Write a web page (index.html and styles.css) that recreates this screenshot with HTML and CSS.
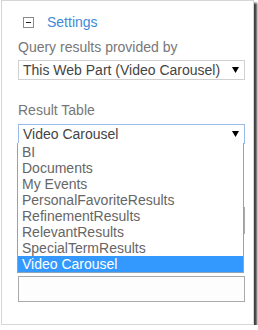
FILE: index.html
```html
<!DOCTYPE html>
<html lang="en">
<head>
  <meta charset="UTF-8">
  <title>Settings</title>
  <link rel="stylesheet" href="styles.css">
</head>
<body>
  <div class="panel">
    <div class="header">
      <span class="toggle"></span>
      <span class="header-title">Settings</span>
    </div>

    <div class="label label-first">Query results provided by</div>
    <div class="select">
      <span>This Web Part (Video Carousel)</span>
      <svg class="arrow" width="7" height="6" viewBox="0 0 7 6"><polygon points="0,0 7,0 3.5,6" fill="#000"/></svg>
    </div>

    <div class="label label-second">Result Table</div>
    <div class="select select-open">
      <span>Video Carousel</span>
      <svg class="arrow" width="7" height="6" viewBox="0 0 7 6"><polygon points="0,0 7,0 3.5,6" fill="#000"/></svg>
      <ul class="options">
        <li>BI</li>
        <li>Documents</li>
        <li>My Events</li>
        <li>PersonalFavoriteResults</li>
        <li>RefinementResults</li>
        <li>RelevantResults</li>
        <li>SpecialTermResults</li>
        <li class="selected">Video Carousel</li>
      </ul>
    </div>

    <div class="textbox textbox-hidden"></div>
    <div class="textbox textbox-last"></div>
  </div>
</body>
</html>
```

FILE: styles.css
```css
body {
  margin: 0;
  background: #fff;
  font-family: "Liberation Sans", Arial, sans-serif;
  font-size: 14px;
  line-height: 16px;
}
.panel {
  box-sizing: border-box;
  width: 253px;
  height: 325px;
  margin-left: 1px;
  padding: 13px 8px 0 16px;
  background: #fff;
  border: 1px solid #d6d6d6;
  box-shadow: 3px 3px 2px rgba(0, 0, 0, 0.75);
}
.header {
  display: flex;
  align-items: flex-start;
  height: 16px;
}
.toggle {
  position: relative;
  box-sizing: border-box;
  width: 11px;
  height: 11px;
  margin: 3px 0 0 5px;
  border: 1px solid #8a8a8a;
  background: #fff;
}
.toggle::after {
  content: "";
  position: absolute;
  left: 2px;
  top: 4px;
  width: 5px;
  height: 1px;
  background: #222;
}
.header-title {
  margin-left: 13px;
  color: #3d8bd6;
}
.label {
  color: #777;
}
.label-first {
  margin-top: 9px;
}
.label-second {
  margin-top: 22px;
}
.select {
  position: relative;
  box-sizing: border-box;
  display: flex;
  align-items: center;
  justify-content: space-between;
  height: 20px;
  margin-top: 5px;
  padding: 0 5px 0 4px;
  border: 1px solid #d0d0d0;
  background: #fff;
  color: #444;
}
.select-open {
  margin-top: 6px;
  border-color: #9cbbe8;
  z-index: 2;
}
.arrow {
  display: block;
}
.options {
  position: absolute;
  left: -2px;
  right: 0;
  top: 100%;
  margin: 0;
  padding: 0;
  list-style: none;
  background: #fff;
  border: 1px solid #8ea3bd;
  border-top: none;
}
.options li {
  height: 16px;
  padding-left: 4px;
  color: #666;
  white-space: nowrap;
}
.options li:first-child {
  margin-top: 1px;
}
.options .selected {
  background: #3399ff;
  color: #fff;
}
.textbox {
  box-sizing: border-box;
  border: 1px solid #aaa;
  background: #fdfdfd;
}
.textbox-hidden {
  height: 27px;
  margin-top: 63px;
}
.textbox-last {
  height: 26px;
  margin-top: 42px;
}
```
